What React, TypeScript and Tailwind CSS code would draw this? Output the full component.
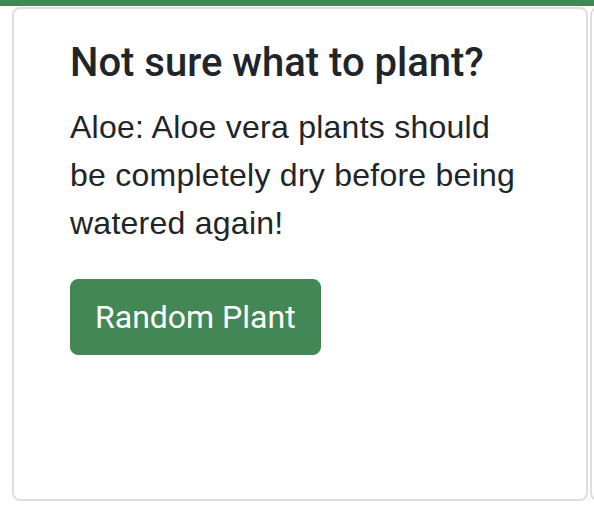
import React from "react";

export default function App() {
  return (
    <div className="w-[594px] h-[514px] bg-white overflow-hidden relative" style={{ fontFamily: "Roboto, 'Liberation Sans', sans-serif" }}>
      <div className="h-[6px] bg-[#438757]" />
      <div className="flex gap-[2px] pl-[12px] pt-[1px]">
        <div className="w-[576px] h-[494px] shrink-0 border-2 border-[#dedede] rounded-[8px] px-[56px] pt-[30px] text-[#212529]">
          <h5 className="text-[40px] leading-[48px] font-medium mb-[16px]">Not sure what to plant?</h5>
          <p className="w-[450px] text-[32px] leading-[48px] tracking-[0.25px] mb-[32px] font-['Liberation_Sans',Arial,sans-serif]">Aloe: Aloe vera plants should be completely dry before being watered again!</p>
          <button className="bg-[#438757] text-white text-[32px] leading-[48px] px-[24px] py-[13px] rounded-[8px] border border-[#438757]">Random Plant</button>
        </div>
        <div className="w-[40px] h-[494px] shrink-0 border-2 border-[#dedede] rounded-[8px]" />
      </div>
    </div>
  );
}
